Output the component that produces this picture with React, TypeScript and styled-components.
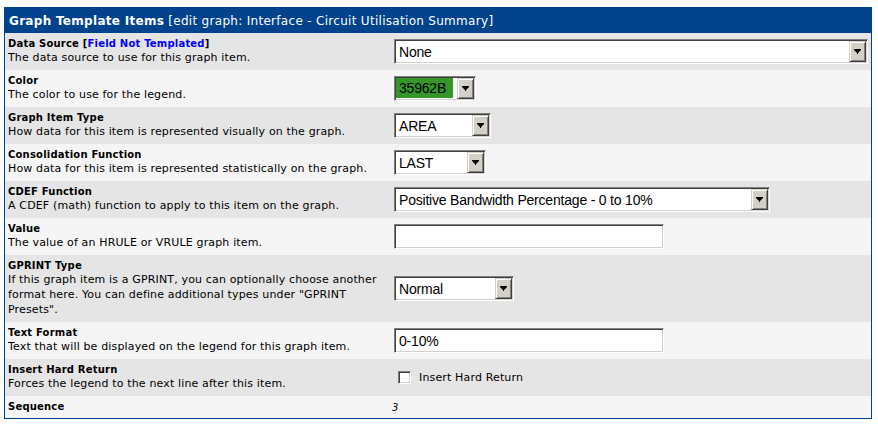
import React from "react"
import styled, { createGlobalStyle } from "styled-components"

const GlobalStyle = createGlobalStyle`
  html, body {
    margin: 0;
    padding: 0;
    background: #ffffff;
  }
  body {
    font-family: "DejaVu Sans", Verdana, sans-serif;
    font-size: 11px;
    letter-spacing: 0.15px;
    color: #000000;
  }
`

const Panel = styled.div`
  width: 868px;
  margin: 7px 0 0 4px;
  border: 1px solid #00438c;
  box-sizing: border-box;
`

const Header = styled.div`
  height: 25px;
  background: #00438c;
  color: #ffffff;
  display: flex;
  align-items: center;
  padding: 0 4px;
  font-size: 12px;
  letter-spacing: 0.3px;
  white-space: nowrap;
  strong {
    font-weight: bold;
    margin-right: 4px;
  }
`

const Row = styled.div<{ $alt: boolean }>`
  display: grid;
  grid-template-columns: 384px 1fr;
  background: ${({ $alt }) => ($alt ? "#f5f5f5" : "#e5e5e5")};
`

const LabelCell = styled.div`
  padding: 5px 0 5px 3px;
`

const Title = styled.div`
  font-weight: bold;
  font-size: 10px;
  letter-spacing: 0.2px;
  line-height: 12px;
  .nt {
    color: #0000ff;
  }
`

const Desc = styled.div`
  line-height: 15px;
`

const FieldCell = styled.div`
  display: flex;
  align-items: center;
  padding: 0 3px;
`

const Sunken = styled.div<{ $w: number }>`
  width: ${({ $w }) => $w}px;
  height: 25px;
  margin-left: 2px;
  box-sizing: border-box;
  display: flex;
  background: #ffffff;
  border: 1px solid;
  border-color: #808080 #ffffff #ffffff #808080;
  box-shadow: inset 1px 1px 0 #404040, inset -1px -1px 0 #d4d0c8;
  padding: 1px;
`

const Value = styled.div<{ $bg?: string }>`
  flex: 1;
  display: flex;
  align-items: center;
  padding-left: 3px;
  margin: ${({ $bg }) => ($bg ? "0 4px 1px 0" : "0")};
  background: ${({ $bg }) => $bg || "transparent"};
  font-family: "Liberation Sans", Arial, sans-serif;
  font-size: 14px;
  letter-spacing: -0.2px;
  white-space: nowrap;
  overflow: hidden;
`

const DropButton = styled.div`
  width: 17px;
  box-sizing: border-box;
  background: #d4d0c8;
  border: 1px solid;
  border-color: #d4d0c8 #404040 #404040 #d4d0c8;
  box-shadow: inset 1px 1px 0 #ffffff, inset -1px -1px 0 #808080;
  display: flex;
  align-items: center;
  justify-content: center;
`

const CheckLabel = styled.label`
  display: flex;
  align-items: center;
  gap: 8px;
  margin-left: 6px;
`

const CheckBox = styled.span`
  width: 13px;
  height: 13px;
  box-sizing: border-box;
  background: #ffffff;
  border: 1px solid;
  border-color: #808080 #ffffff #ffffff #808080;
  box-shadow: inset 1px 1px 0 #404040, inset -1px -1px 0 #d4d0c8;
`

const Seq = styled.span`
  font-style: italic;
  font-size: 10px;
`

const Arrow = () => (
  <svg width="7" height="5" viewBox="0 0 7 5">
    <polygon points="0,0 7,0 7,1 4,4 4,5 3,5 3,4 0,1" fill="#000000" />
  </svg>
)

const Select: React.FC<{ width: number; value: string; bg?: string }> = ({ width, value, bg }) => (
  <Sunken $w={width}>
    <Value $bg={bg}>{value}</Value>
    <DropButton>
      <Arrow />
    </DropButton>
  </Sunken>
)

const TextInput: React.FC<{ width: number; value: string }> = ({ width, value }) => (
  <Sunken $w={width}>
    <Value>{value}</Value>
  </Sunken>
)

type Item = {
  title: React.ReactNode
  desc?: string
  field: React.ReactNode
}

const items: Item[] = [
  {
    title: (
      <>
        Data Source [<span className="nt">Field Not Templated</span>]
      </>
    ),
    desc: "The data source to use for this graph item.",
    field: <Select width={474} value="None" />,
  },
  {
    title: "Color",
    desc: "The color to use for the legend.",
    field: <Select width={82} value="35962B" bg="#35962b" />,
  },
  {
    title: "Graph Item Type",
    desc: "How data for this item is represented visually on the graph.",
    field: <Select width={97} value="AREA" />,
  },
  {
    title: "Consolidation Function",
    desc: "How data for this item is represented statistically on the graph.",
    field: <Select width={92} value="LAST" />,
  },
  {
    title: "CDEF Function",
    desc: "A CDEF (math) function to apply to this item on the graph.",
    field: <Select width={376} value="Positive Bandwidth Percentage - 0 to 10%" />,
  },
  {
    title: "Value",
    desc: "The value of an HRULE or VRULE graph item.",
    field: <TextInput width={270} value="" />,
  },
  {
    title: "GPRINT Type",
    desc: 'If this graph item is a GPRINT, you can optionally choose another format here. You can define additional types under "GPRINT Presets".',
    field: <Select width={120} value="Normal" />,
  },
  {
    title: "Text Format",
    desc: "Text that will be displayed on the legend for this graph item.",
    field: <TextInput width={270} value="0-10%" />,
  },
  {
    title: "Insert Hard Return",
    desc: "Forces the legend to the next line after this item.",
    field: (
      <CheckLabel>
        <CheckBox />
        Insert Hard Return
      </CheckLabel>
    ),
  },
  {
    title: "Sequence",
    field: <Seq>3</Seq>,
  },
]

export default function App() {
  return (
    <>
      <GlobalStyle />
      <Panel>
        <Header>
          <strong>Graph Template Items</strong>[edit graph: Interface - Circuit Utilisation Summary]
        </Header>
        {items.map((item, i) => (
          <Row key={i} $alt={i % 2 === 1}>
            <LabelCell>
              <Title>{item.title}</Title>
              {item.desc && <Desc>{item.desc}</Desc>}
            </LabelCell>
            <FieldCell>{item.field}</FieldCell>
          </Row>
        ))}
      </Panel>
    </>
  )
}
